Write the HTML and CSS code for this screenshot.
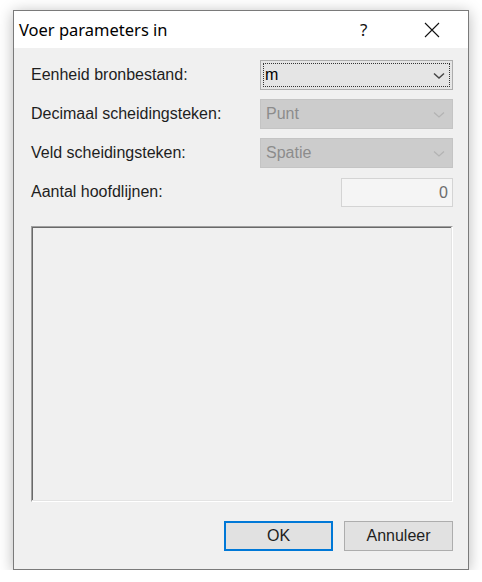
FILE: index.html
```html
<!DOCTYPE html>
<html lang="nl">

<head>
    <meta charset="UTF-8">
    <title>Voer parameters in</title>
    <link rel="stylesheet" href="styles.css">
</head>

<body>

    <div class="window">
        <div class="titlebar">
            <span class="title">Voer parameters in</span>
            <span class="help">?</span>
            <span class="close">
                <svg width="16" height="16" viewBox="0 0 16 16">
                    <path d="M1 1 L15 15 M15 1 L1 15" stroke="#111" stroke-width="1.1" fill="none" />
                </svg>
            </span>
        </div>

        <div class="content">
            <div class="form">
                <label>Eenheid bronbestand:</label>
                <div class="combo focused">
                    <span class="focus-box"><span class="value">m</span></span>
                    <svg class="arrow" width="12" height="8" viewBox="0 0 12 8">
                        <path d="M1 1.5 L6 6 L11 1.5" stroke="#444" stroke-width="1.4" fill="none" />
                    </svg>
                </div>

                <label>Decimaal scheidingsteken:</label>
                <div class="combo disabled">
                    <span class="value">Punt</span>
                    <svg class="arrow" width="12" height="8" viewBox="0 0 12 8">
                        <path d="M1 1.5 L6 6 L11 1.5" stroke="#b3b3b3" stroke-width="1.2" fill="none" />
                    </svg>
                </div>

                <label>Veld scheidingsteken:</label>
                <div class="combo disabled">
                    <span class="value">Spatie</span>
                    <svg class="arrow" width="12" height="8" viewBox="0 0 12 8">
                        <path d="M1 1.5 L6 6 L11 1.5" stroke="#b3b3b3" stroke-width="1.2" fill="none" />
                    </svg>
                </div>

                <label>Aantal hoofdlijnen:</label>
                <div class="numbox">0</div>
            </div>

            <div class="panel"></div>

            <div class="buttons">
                <button class="btn default">OK</button>
                <button class="btn">Annuleer</button>
            </div>
        </div>
    </div>

</body>

</html>
```

FILE: styles.css
```css
body {
    margin: 0;
    background: #ffffff;
    font-family: "Liberation Sans", Arial, sans-serif;
}

.window {
    margin: 10px 0 0 13px;
    width: 454px;
    border: 1px solid #7a7a7a;
    background: #f0f0f0;
    box-shadow: 0 2px 14px rgba(0, 0, 0, 0.28);
}

.titlebar {
    height: 37px;
    background: #ffffff;
    display: flex;
    align-items: center;
}

.title {
    flex: 1;
    padding-left: 5px;
    font-family: "Noto Sans", "Open Sans", sans-serif;
    font-size: 16.5px;
    color: #000000;
}

.help {
    width: 20px;
    font-family: "Noto Sans", sans-serif;
    font-size: 17px;
    color: #111;
    margin-right: 44px;
}

.close {
    width: 16px;
    height: 16px;
    margin-right: 28px;
}

.close svg {
    display: block;
}

.content {
    padding: 12px 15px 18px 17px;
}

.form {
    display: grid;
    grid-template-columns: 1fr 193px;
    grid-auto-rows: 30px;
    row-gap: 9px;
    align-items: center;
}

.form label {
    font-size: 16px;
    color: #1e1e1e;
}

.combo {
    height: 30px;
    box-sizing: border-box;
    border: 1px solid #adadad;
    display: flex;
    align-items: center;
    position: relative;
    font-size: 16px;
}

.combo .arrow {
    position: absolute;
    right: 7px;
    top: 11px;
}

.combo.focused {
    background: #e5e5e5;
    padding: 2px;
}

.focus-box {
    flex: 1;
    align-self: stretch;
    border: 1px dotted #333;
    display: flex;
    align-items: center;
    padding-left: 1px;
    color: #000;
}

.combo.disabled {
    background: #cccccc;
    border-color: #c4c4c4;
    color: #8c8c8c;
    padding-left: 5px;
}

.numbox {
    justify-self: end;
    align-self: end;
    width: 112px;
    height: 29px;
    box-sizing: border-box;
    border: 1px solid #d4d4d4;
    background: #f5f5f5;
    color: #6d6d6d;
    font-size: 16px;
    text-align: right;
    line-height: 27px;
    padding-right: 4px;
}

.panel {
    margin-top: 19px;
    height: 276px;
    box-sizing: border-box;
    border-style: solid;
    border-width: 1px;
    border-color: #a0a0a0 #ffffff #ffffff #a0a0a0;
    box-shadow: inset -1px -1px 0 #e3e3e3, inset 1px 1px 0 #696969;
}

.buttons {
    margin-top: 19px;
    display: flex;
    justify-content: flex-end;
    gap: 11px;
}

.btn {
    width: 109px;
    height: 30px;
    box-sizing: border-box;
    background: #e1e1e1;
    border: 1px solid #adadad;
    font-family: "Liberation Sans", Arial, sans-serif;
    font-size: 16px;
    color: #1e1e1e;
    padding: 0;
}

.btn.default {
    border: 2px solid #0078d7;
}
```
